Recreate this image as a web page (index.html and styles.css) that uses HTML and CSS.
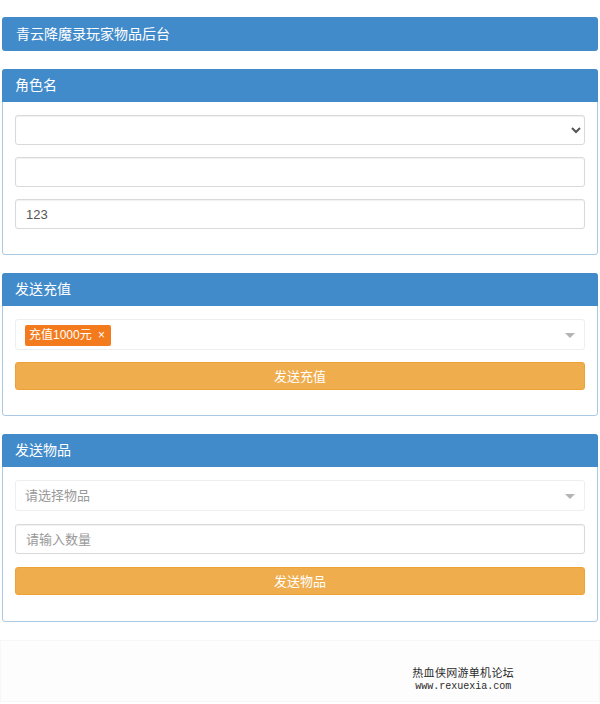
FILE: index.html
```html
<!DOCTYPE html>
<html>
<head lang="zh">
  <meta charset="UTF-8">
  <title>青云降魔录玩家物品后台</title>
  <link rel="stylesheet" href="styles.css">
</head>
<body>
<div class="page">
  <div class="top-bar">青云降魔录玩家物品后台</div>

  <div class="panel">
    <div class="panel-title">角色名</div>
    <div class="panel-body">
      <div class="form-row">
        <select class="form-input form-select">
          <option></option>
        </select>
      </div>
      <div class="form-row">
        <input type="text" class="form-input" value="">
      </div>
      <div class="form-row">
        <input type="text" class="form-input" value="123">
      </div>
    </div>
  </div>

  <div class="panel">
    <div class="panel-title">发送充值</div>
    <div class="panel-body">
      <div class="form-row">
        <div class="choose-box">
          <span class="choose-tag">充值1000元 <span class="tag-close">×</span></span>
          <span class="choose-arrow"></span>
        </div>
      </div>
      <div class="form-row">
        <a href="javascript:void(0);" class="send-button">发送充值</a>
      </div>
    </div>
  </div>

  <div class="panel panel-last">
    <div class="panel-title">发送物品</div>
    <div class="panel-body">
      <div class="form-row">
        <div class="choose-box">
          <span class="choose-placeholder">请选择物品</span>
          <span class="choose-arrow"></span>
        </div>
      </div>
      <div class="form-row">
        <input type="text" class="form-input" placeholder="请输入数量">
      </div>
      <div class="form-row">
        <a href="javascript:void(0);" class="send-button">发送物品</a>
      </div>
    </div>
  </div>

  <div class="footer-box">
    <div class="watermark">
      <div class="watermark-name">热血侠网游单机论坛</div>
      <div class="watermark-url">www.rexuexia.com</div>
    </div>
  </div>
</div>
</body>
</html>
```

FILE: styles.css
```css
* {
  box-sizing: border-box;
}

body {
  margin: 0;
  background: #ffffff;
  font-family: "Liberation Sans", "Noto Sans CJK SC", sans-serif;
  font-size: 13px;
  color: #555555;
}

.page {
  width: 600px;
  padding: 17px 2px 0 2px;
  display: flex;
  flex-direction: column;
  gap: 18px;
}

.top-bar {
  height: 34px;
  line-height: 34px;
  padding-left: 14px;
  background: #428bca;
  color: #ffffff;
  font-size: 14px;
  border-radius: 3px;
}

.panel {
  border: 1px solid #a9c9e4;
  border-radius: 3px;
  background: #ffffff;
}

.panel-title {
  height: 33px;
  line-height: 33px;
  padding-left: 13px;
  margin: -1px -1px 0 -1px;
  background: #428bca;
  color: #ffffff;
  font-size: 14px;
  border-radius: 3px 3px 0 0;
}

.panel-body {
  padding: 13px 12px 0 12px;
}

.form-row {
  margin-bottom: 12px;
}

.form-row:last-child {
  margin-bottom: 25px;
}

.panel-last .form-row {
  margin-bottom: 13px;
}

.panel-last .form-row:last-child {
  margin-bottom: 26px;
}

.form-input {
  display: block;
  width: 100%;
  height: 30px;
  padding: 0 10px;
  border: 1px solid #d9d9d9;
  border-radius: 3px;
  background: #ffffff;
  font-family: "Liberation Sans", "Noto Sans CJK SC", sans-serif;
  font-size: 13px;
  color: #555555;
  box-shadow: inset 0 1px 1px rgba(0, 0, 0, 0.06);
  outline: none;
}

.form-input::placeholder {
  color: #999999;
}

.form-select {
  padding-left: 6px;
}

.choose-box {
  position: relative;
  height: 31px;
  padding: 5px 9px;
  border: 1px solid #eeeeee;
  border-radius: 3px;
  background: #ffffff;
}

.choose-tag {
  display: inline-block;
  height: 21px;
  line-height: 21px;
  padding: 0 6px 0 4px;
  background: #f37b1d;
  color: #ffffff;
  border-radius: 2px;
  font-size: 12px;
}

.tag-close {
  margin-left: 3px;
  font-size: 12px;
}

.choose-placeholder {
  line-height: 19px;
  color: #999999;
}

.choose-arrow {
  position: absolute;
  right: 9px;
  top: 13px;
  border-left: 5px solid transparent;
  border-right: 5px solid transparent;
  border-top: 5px solid #b4b4b4;
}

a {
  text-decoration: none;
}

.send-button {
  display: block;
  height: 28px;
  line-height: 28px;
  text-align: center;
  background: #f0ad4e;
  border: 1px solid #eea236;
  border-radius: 3px;
  color: #ffffff;
  font-size: 13px;
}

.footer-box {
  height: 62px;
  margin: 0 -2px;
  border: 1px solid #f7f7f7;
  background: #fdfdfd;
  display: flex;
  justify-content: flex-end;
  align-items: flex-end;
  padding: 0 85px 8px 0;
}

.watermark {
  text-align: center;
  color: #2a2a2a;
  text-shadow: 1px 0 0 #fff, -1px 0 0 #fff, 0 1px 0 #fff, 0 -1px 0 #fff;
}

.watermark-name {
  font-size: 11px;
  line-height: 16px;
  letter-spacing: 0.3px;
}

.watermark-url {
  font-family: "Liberation Mono", monospace;
  font-size: 10px;
  line-height: 12px;
}
```
